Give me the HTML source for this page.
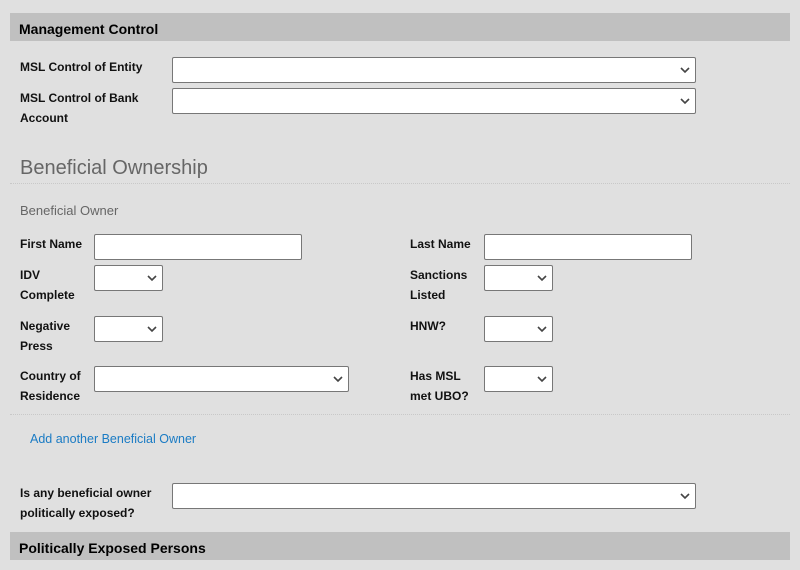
<!DOCTYPE html><html><head><style>
body{margin:0;width:800px;height:570px;background:#e0e0e0;font-family:"Liberation Sans",Arial,sans-serif;position:relative;overflow:hidden}
.a{position:absolute}
.bar{left:10px;width:780px;height:28px;background:#c0c0c0;font-weight:bold;font-size:14px;line-height:33px;padding-left:9px;box-sizing:border-box;color:#000}
.l{font-weight:bold;font-size:12px;line-height:20px;color:#111}
.s{background:#fff;border:1px solid #777;border-radius:2px;box-sizing:border-box;height:26px}
.s svg{position:absolute;right:5px;top:9px}
.hr{left:10px;width:780px;border-top:1px dotted #c8c8c8;height:0}
</style></head><body>
<div class="a bar" style="top:13px">Management Control</div>
<div class="a l" style="left:20px;top:57px">MSL Control of Entity</div>
<div class="a s" style="left:172px;top:57px;width:524px"><svg width="10" height="7"><path d="M1 1L5 5L9 1" stroke="#444" stroke-width="1.6" fill="none"/></svg></div>
<div class="a l" style="left:20px;top:88px">MSL Control of Bank<br>Account</div>
<div class="a s" style="left:172px;top:88px;width:524px"><svg width="10" height="7"><path d="M1 1L5 5L9 1" stroke="#444" stroke-width="1.6" fill="none"/></svg></div>
<div class="a" style="left:20px;top:157px;font-size:20px;color:#666">Beneficial Ownership</div>
<div class="a hr" style="top:183px"></div>
<div class="a" style="left:20px;top:203px;font-size:13px;color:#666">Beneficial Owner</div>
<div class="a l" style="left:20px;top:234px">First Name</div>
<div class="a s" style="left:94px;top:234px;width:208px"></div>
<div class="a l" style="left:410px;top:234px">Last Name</div>
<div class="a s" style="left:484px;top:234px;width:208px"></div>
<div class="a l" style="left:20px;top:265px">IDV<br>Complete</div>
<div class="a s" style="left:94px;top:265px;width:69px"><svg width="10" height="7"><path d="M1 1L5 5L9 1" stroke="#444" stroke-width="1.6" fill="none"/></svg></div>
<div class="a l" style="left:410px;top:265px">Sanctions<br>Listed</div>
<div class="a s" style="left:484px;top:265px;width:69px"><svg width="10" height="7"><path d="M1 1L5 5L9 1" stroke="#444" stroke-width="1.6" fill="none"/></svg></div>
<div class="a l" style="left:20px;top:316px">Negative<br>Press</div>
<div class="a s" style="left:94px;top:316px;width:69px"><svg width="10" height="7"><path d="M1 1L5 5L9 1" stroke="#444" stroke-width="1.6" fill="none"/></svg></div>
<div class="a l" style="left:410px;top:316px">HNW?</div>
<div class="a s" style="left:484px;top:316px;width:69px"><svg width="10" height="7"><path d="M1 1L5 5L9 1" stroke="#444" stroke-width="1.6" fill="none"/></svg></div>
<div class="a l" style="left:20px;top:366px">Country of<br>Residence</div>
<div class="a s" style="left:94px;top:366px;width:255px"><svg width="10" height="7"><path d="M1 1L5 5L9 1" stroke="#444" stroke-width="1.6" fill="none"/></svg></div>
<div class="a l" style="left:410px;top:366px">Has MSL<br>met UBO?</div>
<div class="a s" style="left:484px;top:366px;width:69px"><svg width="10" height="7"><path d="M1 1L5 5L9 1" stroke="#444" stroke-width="1.6" fill="none"/></svg></div>
<div class="a hr" style="top:414px"></div>
<div class="a" style="left:30px;top:432px;font-size:12.5px;color:#1a7bc4">Add another Beneficial Owner</div>
<div class="a l" style="left:20px;top:483px">Is any beneficial owner<br>politically exposed?</div>
<div class="a s" style="left:172px;top:483px;width:524px"><svg width="10" height="7"><path d="M1 1L5 5L9 1" stroke="#444" stroke-width="1.6" fill="none"/></svg></div>
<div class="a bar" style="top:532px">Politically Exposed Persons</div>
</body></html>
